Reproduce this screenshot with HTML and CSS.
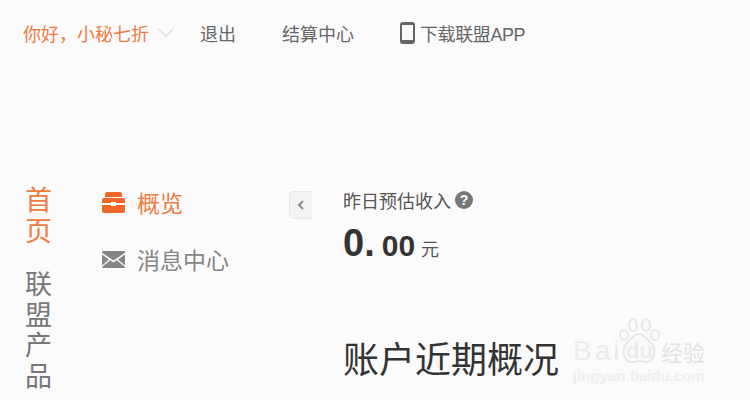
FILE: index.html
```html
<!DOCTYPE html>
<html lang="zh-CN">
  <head>
    <meta charset="UTF-8" />
    <link rel="stylesheet" href="styles.css">
  </head>
  <body>
    <div class="top">
      <a class="user">你好<span class="comma">，</span>小秘七折</a>
      <svg class="arrow" width="16" height="10" viewBox="0 0 16 10"><path d="M1 1l7 7.500L15 1" fill="none" stroke="#dcdcdc" stroke-width="1.3"/></svg>
      <a class="logout">退出</a>
      <a class="settle">结算中心</a>
      <svg class="phone" width="15" height="22" viewBox="0 0 15 22"><path fill="#666" fill-rule="evenodd" d="M3 0h9a3 3 0 0 1 3 3v16a3 3 0 0 1-3 3H3a3 3 0 0 1-3-3V3a3 3 0 0 1 3-3zM2 3v15h11V3z"/></svg>
      <a class="app">下载联盟APP</a>
    </div>

    <div class="main">
      <div class="nav">
        <div class="nav-on">首页</div>
        <div class="nav-off">联盟产品</div>
      </div>
      <div class="side">
        <div class="side-row side-on">
          <svg width="23" height="22" viewBox="0 0 23 22"><path fill="#f0672a" d="M5 1h13a2 2 0 0 1 2 2v3H3V3a2 2 0 0 1 2-2zM0 9a2 2 0 0 1 2-2h19a2 2 0 0 1 2 2v3H14v-1H9v1H0zM0 14h9v1h5v-1h9v6a2 2 0 0 1-2 2H2a2 2 0 0 1-2-2z"/></svg>
          <span>概览</span>
        </div>
        <div class="side-row">
          <svg width="23" height="17" viewBox="0 0 23 17"><path fill="#858585" d="M1 0h21a1 1 0 0 1 1 1v.8L11.500 9.500 0 1.800V1a1 1 0 0 1 1-1zM0 3.600l7 4.800-7 6zM23 3.600v10.800l-7-6zM8.200 9.300l3.300 2.200 3.300-2.200L23 16a1 1 0 0 1-1 1H1a1 1 0 0 1-1-1z"/></svg>
          <span>消息中心</span>
        </div>
      </div>
      <div class="fold">
        <svg width="8" height="10" viewBox="0 0 8 10"><path d="M6 1L2 5l4 4" fill="none" stroke="#8a8a8a" stroke-width="2"/></svg>
      </div>
      <div class="content">
        <div class="label">昨日预估收入<span class="help">?</span></div>
        <div class="money"><b>0.</b><strong>00</strong><span>元</span></div>
        <h1>账户近期概况</h1>
      </div>
    </div>

    <div class="mark">
      <svg class="paw" width="42" height="46" viewBox="0 0 42 46"><g fill="none" stroke="#e8e8e8" stroke-width="2"><ellipse cx="6" cy="17" rx="4" ry="5"/><ellipse cx="15" cy="7" rx="4" ry="6"/><ellipse cx="28" cy="7" rx="4" ry="6"/><ellipse cx="37" cy="17" rx="4" ry="5"/><path d="M21 16c6 0 8 6 12 9 5 4 5 19-5 19-3 0-5-1-7-1s-4 1-7 1C4 44 4 29 9 25c4-3 6-9 12-9z"/></g></svg>
      <div class="mark-name"><span class="mark-bai">Bai</span><span class="mark-du">du</span><span class="mark-cn">经验</span></div>
      <div class="mark-url">jingyan.baidu.com</div>
    </div>
  </body>
</html>
```

FILE: styles.css
```css
body {
  margin: 0;
  height: 400px;
  overflow: hidden;
  position: relative;
  background-color: #fbfbfb;
  font-family: "Liberation Sans", "Noto Sans CJK SC", sans-serif;
  color: #666;
}
.top {
  display: flex;
  align-items: center;
  height: 65px;
  padding-left: 23px;
  font-size: 18px;
}
.user {
  color: #ee7b3f;
  width: 126px;
  white-space: nowrap;
}
.comma {
  font-family: "Noto Sans CJK TC", sans-serif;
}
.arrow {
  margin-left: 9px;
}
.logout {
  margin-left: 26px;
}
.settle {
  margin-left: 46px;
}
.phone {
  margin-left: 46px;
  margin-right: 5px;
}
.app {
  letter-spacing: -0.4px;
}
.main {
  display: flex;
  margin-top: 120px;
}
.nav {
  width: 28px;
  margin-left: 25px;
  padding-top: 1px;
  font-size: 27px;
  line-height: 30.500px;
}
.nav-on {
  color: #ee7b3f;
  width: 28px;
  margin-bottom: 23px;
}
.nav-off {
  color: #777;
  width: 28px;
}
.side {
  width: 188px;
  margin-left: 48px;
}
.side-row {
  display: flex;
  align-items: center;
  height: 36px;
  margin-bottom: 22px;
  margin-top: -1px;
  font-size: 23px;
  color: #858585;
}
.side-on {
  color: #ee7b3f;
}
.side-row svg {
  margin-right: 12px;
  margin-left: 1px;
}
.fold {
  width: 22px;
  height: 26px;
  margin-top: 6px;
  display: flex;
  align-items: center;
  justify-content: center;
  background-color: #f4f4f4;
  border: 1px solid #e8e8e8;
  border-right: none;
  border-radius: 5px 0 0 5px;
}
.content {
  margin-left: 31px;
}
.label {
  display: flex;
  align-items: center;
  font-size: 18px;
  height: 30px;
  color: #555;
}
.help {
  width: 18px;
  height: 18px;
  margin-left: 4px;
  border-radius: 50%;
  background-color: #777;
  color: #fff;
  font-size: 14px;
  font-weight: bold;
  line-height: 18px;
  text-align: center;
}
.money {
  display: flex;
  align-items: baseline;
  height: 50px;
  margin-top: 7px;
  color: #333;
}
.money b {
  font-size: 38px;
}
.money strong {
  font-size: 30px;
  margin-left: 7px;
}
.money span {
  font-size: 18px;
  margin-left: 6px;
  color: #555;
}
h1 {
  margin: 64px 0 0;
  font-size: 36px;
  line-height: 50px;
  font-weight: normal;
  color: #333;
}
.mark {
  position: absolute;
  left: 573px;
  top: 338px;
  width: 134px;
  color: #ececec;
}
.paw {
  position: absolute;
  left: 45px;
  top: -20px;
}
.mark-name {
  display: flex;
  align-items: center;
  height: 26px;
  white-space: nowrap;
}
.mark-bai {
  width: 53px;
  font-size: 28px;
  letter-spacing: 3px;
}
.mark-du {
  width: 36px;
  font-size: 22px;
  font-weight: bold;
}
.mark-cn {
  margin-left: -1px;
  font-size: 22px;
  color: #e2e2e2;
}
.mark-url {
  margin-top: 3px;
  font-size: 15px;
  font-weight: bold;
  white-space: nowrap;
  color: #efefef;
}
```
